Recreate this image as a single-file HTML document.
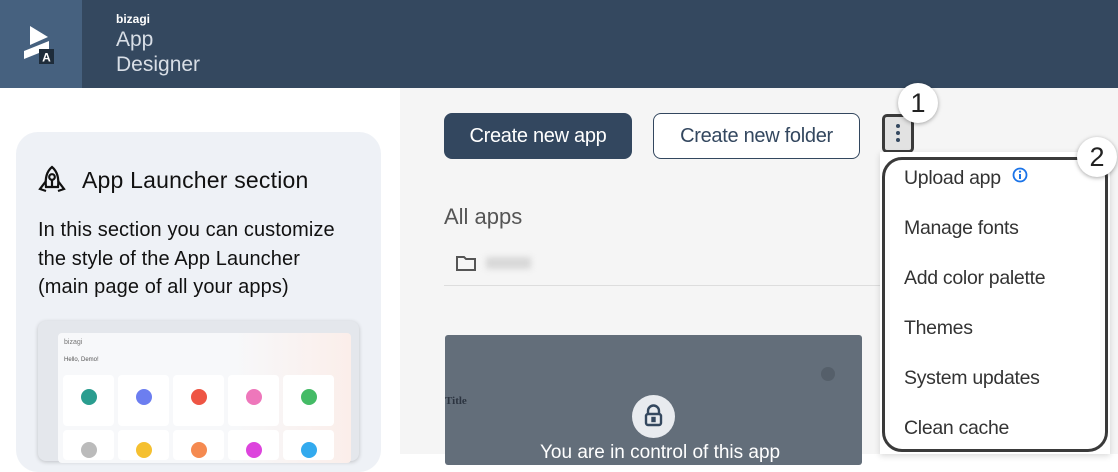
<!DOCTYPE html>
<html><head><style>
*{margin:0;padding:0;box-sizing:border-box}
body{width:1118px;height:454px;overflow:hidden;background:#fff;font-family:"Liberation Sans",sans-serif;position:relative}
.abs{position:absolute}
.hdr{left:0;top:0;width:1118px;height:88px;background:#34485f}
.logo{left:0;top:0;width:82px;height:88px;background:#46617f}
.right{left:400px;top:88px;width:718px;height:366px;background:#f5f5f5}
.card{left:16px;top:132px;width:365px;height:340px;background:#eef1f6;border-radius:22px}
.btn{border-radius:8px;font-size:20px;display:flex;align-items:center;justify-content:center;letter-spacing:-0.3px}
.mi{left:904px;font-size:19.5px;color:#333;letter-spacing:-0.3px}
.badge{width:40px;height:40px;border-radius:50%;background:#fff;box-shadow:0 1px 4px rgba(0,0,0,.35);font-size:27px;color:#222;display:flex;align-items:center;justify-content:center}
</style></head><body>
<div class="abs hdr"></div>
<div class="abs logo"></div>
<svg class="abs" style="left:22px;top:24px" width="36" height="42" viewBox="0 0 36 42">
<polygon points="8,2 26,13 8,21" fill="#fff"/>
<polygon points="2,27 27,17 27,25 2,35" fill="#fff"/>
<rect x="17" y="25" width="15" height="15" fill="#1e2c3a"/>
<text x="24.5" y="37.5" font-size="12" font-weight="bold" fill="#fff" text-anchor="middle" font-family="Liberation Sans">A</text>
</svg>
<div class="abs" style="left:116px;top:12px;color:#fff;font-size:12px;font-weight:bold">bizagi</div>
<div class="abs" style="left:116px;top:27px;color:#d8dee6;font-size:21px;line-height:25px">App<br>Designer</div>
<div class="abs right"></div>
<div class="abs card"></div>
<svg class="abs" style="left:37px;top:165px" width="30" height="30" viewBox="0 0 30 30" fill="none" stroke="#111" stroke-width="2.2">
<path d="M15 2 C9 7 8 14 9 22 L21 22 C22 14 21 7 15 2Z"/>
<circle cx="15" cy="12" r="2.8"/>
<path d="M15 15 V22"/>
<path d="M9 16 L3 24 L9 26 M21 16 L27 24 L21 26"/>
</svg>
<div class="abs" style="left:82px;top:167px;font-size:23px;color:#111;letter-spacing:0.2px">App Launcher section</div>
<div class="abs" style="left:38px;top:216px;font-size:20px;line-height:28.5px;color:#111;white-space:nowrap;letter-spacing:0.1px">In this section you can customize<br>the style of the App Launcher<br>(main page of all your apps)</div>
<div class="abs" style="left:38px;top:321px;width:321px;height:140px;background:#e4e7ec;border-radius:8px;box-shadow:0 1px 4px rgba(0,0,0,.2)"></div>
<div class="abs" style="left:58px;top:333px;width:293px;height:130px;background:linear-gradient(90deg,#f7f8fa 60%,#fbeeea);border-radius:4px"></div>
<div class="abs" style="left:64px;top:339px;font-size:7px;color:#777">bizagi</div>
<div class="abs" style="left:64px;top:357px;font-size:6px;color:#555">Hello, Demo!</div>
<div style="position:absolute;left:63px;top:375px;display:flex;gap:4px">
<div style="width:51px;height:51px;background:#fff;border-radius:4px;position:relative"><div style="position:absolute;left:18px;top:14px;width:16px;height:16px;border-radius:50%;background:#2a9d8f"></div></div>
<div style="width:51px;height:51px;background:#fff;border-radius:4px;position:relative"><div style="position:absolute;left:18px;top:14px;width:16px;height:16px;border-radius:50%;background:#6c7ef0"></div></div>
<div style="width:51px;height:51px;background:#fff;border-radius:4px;position:relative"><div style="position:absolute;left:18px;top:14px;width:16px;height:16px;border-radius:50%;background:#ee5544"></div></div>
<div style="width:51px;height:51px;background:#fff;border-radius:4px;position:relative"><div style="position:absolute;left:18px;top:14px;width:16px;height:16px;border-radius:50%;background:#ee77bb"></div></div>
<div style="width:51px;height:51px;background:#fff;border-radius:4px;position:relative"><div style="position:absolute;left:18px;top:14px;width:16px;height:16px;border-radius:50%;background:#44bb66"></div></div>
</div>
<div style="position:absolute;left:63px;top:430px;display:flex;gap:4px">
<div style="width:51px;height:30px;background:#fff;border-radius:4px;position:relative"><div style="position:absolute;left:18px;top:12px;width:16px;height:16px;border-radius:50%;background:#bbb"></div></div>
<div style="width:51px;height:30px;background:#fff;border-radius:4px;position:relative"><div style="position:absolute;left:18px;top:12px;width:16px;height:16px;border-radius:50%;background:#f5c030"></div></div>
<div style="width:51px;height:30px;background:#fff;border-radius:4px;position:relative"><div style="position:absolute;left:18px;top:12px;width:16px;height:16px;border-radius:50%;background:#f58a50"></div></div>
<div style="width:51px;height:30px;background:#fff;border-radius:4px;position:relative"><div style="position:absolute;left:18px;top:12px;width:16px;height:16px;border-radius:50%;background:#dd44dd"></div></div>
<div style="width:51px;height:30px;background:#fff;border-radius:4px;position:relative"><div style="position:absolute;left:18px;top:12px;width:16px;height:16px;border-radius:50%;background:#33aaee"></div></div>
</div>

<div class="abs btn" style="left:444px;top:113px;width:188px;height:46px;background:#33475f;color:#fff">Create new app</div>
<div class="abs btn" style="left:653px;top:113px;width:207px;height:46px;border:1px solid #33475f;background:#fff;color:#33475f">Create new folder</div>
<div class="abs" style="left:882px;top:114px;width:32px;height:39px;border:3px solid #3a3a3a;border-radius:5px;background:#e2e2e2"></div>
<div class="abs" style="left:896px;top:124px;width:4px;height:4px;border-radius:50%;background:#34485f;box-shadow:0 7px 0 #34485f,0 14px 0 #34485f"></div>
<div class="abs badge" style="left:898px;top:83px">1</div>

<div class="abs" style="left:444px;top:204px;font-size:22px;color:#555">All apps</div>
<svg class="abs" style="left:456px;top:255px" width="20" height="16" viewBox="0 0 20 16" fill="none" stroke="#555" stroke-width="2"><path d="M1 2 H8 L10 4 H19 V15 H1Z"/></svg>
<div class="abs" style="left:486px;top:257px;width:45px;height:12px;background:#d8d8d8;filter:blur(3px)"></div>
<div class="abs" style="left:444px;top:285px;width:440px;height:1px;background:#ddd"></div>
<div class="abs" style="left:445px;top:335px;width:417px;height:130px;background:#636e7a;border-radius:3px"></div>
<div class="abs" style="left:445px;top:395px;font-size:11px;font-family:'Liberation Serif',serif;font-weight:bold;color:#2c3440">Title</div>
<div class="abs" style="left:821px;top:367px;width:14px;height:14px;border-radius:50%;background:#555f6a"></div>
<div class="abs" style="left:632px;top:395px;width:43px;height:43px;border-radius:50%;background:#e8ebef"></div>
<svg class="abs" style="left:643px;top:404px" width="21" height="23" viewBox="0 0 21 23" fill="none" stroke="#34485f" stroke-width="2.4"><path d="M5 10 V7 A5.5 5.5 0 0 1 16 7 V10"/><rect x="3" y="10" width="15" height="11" rx="2"/><rect x="9.5" y="14" width="2" height="3" fill="#34485f"/></svg>
<div class="abs" style="left:540px;top:442px;font-size:19px;color:#fff">You are in control of this app</div>

<div class="abs" style="left:880px;top:152px;width:230px;height:302px;background:#fff;box-shadow:0 2px 6px rgba(0,0,0,.15)"></div>
<div class="abs" style="left:882px;top:157px;width:226px;height:295px;border:3px solid #3a3a3a;border-radius:20px"></div>
<div class="abs mi" style="top:167px">Upload app</div>
<svg class="abs" style="left:1012px;top:167px" width="16" height="16" viewBox="0 0 16 16"><circle cx="8" cy="8" r="6.5" fill="none" stroke="#1a73e8" stroke-width="1.8"/><rect x="7" y="7" width="2" height="5" fill="#1a73e8"/><circle cx="8" cy="4.6" r="1.1" fill="#1a73e8"/></svg>
<div class="abs mi" style="top:217px">Manage fonts</div>
<div class="abs mi" style="top:267px">Add color palette</div>
<div class="abs mi" style="top:317px">Themes</div>
<div class="abs mi" style="top:367px">System updates</div>
<div class="abs mi" style="top:417px">Clean cache</div>
<div class="abs badge" style="left:1077px;top:137px">2</div>
</body></html>
